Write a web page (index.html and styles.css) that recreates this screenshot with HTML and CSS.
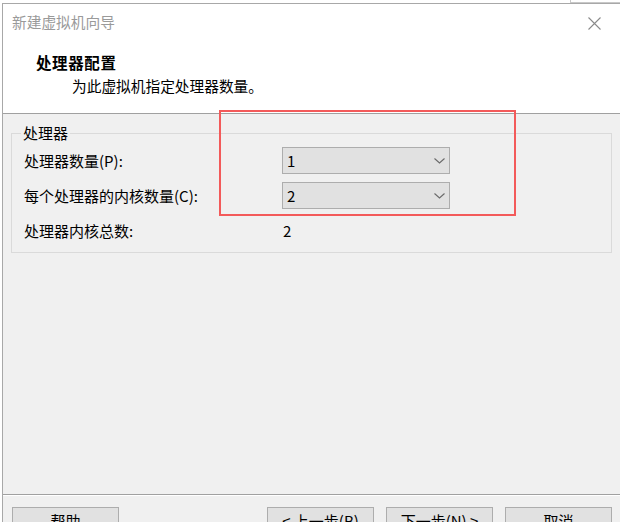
FILE: index.html
```html
<!DOCTYPE html>
<html lang="zh-CN">
<head>
<meta charset="utf-8">
<title>新建虚拟机向导</title>
<link rel="stylesheet" href="styles.css">
</head>
<body>
<div class="behind"></div>
<div class="dialog">
  <div class="header">
    <div class="titlebar">
      <span class="title">新建虚拟机向导</span>
      <svg class="close" width="13" height="13" viewBox="0 0 13 13"><path d="M0.5 0.5 L12.5 12.5 M12.5 0.5 L0.5 12.5" stroke="#8a8a8a" stroke-width="1.1" fill="none"/></svg>
    </div>
    <div class="heading">处理器配置</div>
    <div class="subtitle">为此虚拟机指定处理器数量。</div>
  </div>
  <div class="main">
    <div class="group">
      <div class="legend">处理器</div>
      <div class="rows">
        <div class="label">处理器数量(P):</div>
        <div class="select"><span>1</span><svg width="11" height="6" viewBox="0 0 11 6"><polyline points="0.5,0.5 5.5,5 10.5,0.5" stroke="#6a6a6a" stroke-width="1.1" fill="none"/></svg></div>
        <div class="label">每个处理器的内核数量(C):</div>
        <div class="select"><span>2</span><svg width="11" height="6" viewBox="0 0 11 6"><polyline points="0.5,0.5 5.5,5 10.5,0.5" stroke="#6a6a6a" stroke-width="1.1" fill="none"/></svg></div>
        <div class="label">处理器内核总数:</div>
        <div class="value">2</div>
      </div>
    </div>
  </div>
  <div class="footer">
    <button class="btn">帮助</button>
    <div class="navs">
      <button class="btn">&lt; 上一步(B)</button>
      <button class="btn">下一步(N) &gt;</button>
      <button class="btn">取消</button>
    </div>
  </div>
</div>
<div class="highlight"></div>
</body>
</html>
```
FILE: styles.css
```css
html, body {
  margin: 0;
  padding: 0;
  overflow: hidden;
  height: 522px;
}
body {
  position: relative;
  background: #ffffff;
  padding-top: 3px;
  font-family: "Noto Sans CJK SC", "Microsoft YaHei", sans-serif;
  font-size: 15px;
  color: #000;
  box-sizing: border-box;
}
.behind {
  position: absolute;
  left: 570px;
  top: 0;
  width: 60px;
  height: 2px;
  border-left: 1px solid #c8c8c8;
  border-bottom: 1px solid #c8c8c8;
}
.dialog {
  margin-left: 2px;
  width: 618px;
  border-top: 1px solid #a8a8a8;
  border-left: 1px solid #a8a8a8;
  box-sizing: border-box;
}
.header {
  background: #ffffff;
  height: 110px;
  border-bottom: 1px solid #a0a0a0;
  padding-left: 9px;
  box-sizing: border-box;
}
.titlebar {
  display: flex;
  justify-content: space-between;
  align-items: center;
  padding-top: 8px;
  height: 20px;
  padding-right: 19px;
}
.title {
  color: #9a9a9a;
  line-height: 20px;
  font-size: 14.7px;
}
.close {
  display: block;
  margin-top: 2px;
}
.heading {
  margin-top: 20px;
  margin-left: 24px;
  font-weight: bold;
  font-size: 15.5px;
  letter-spacing: 0.6px;
  line-height: 20px;
}
.subtitle {
  margin-top: 4px;
  margin-left: 60px;
  line-height: 20px;
  font-size: 14.7px;
}
.main {
  background: #f0f0f0;
  height: 380px;
  padding-top: 19px;
  box-sizing: border-box;
}
.group {
  margin: 0 8px 0 8px;
  border: 1px solid #dadada;
  padding: 0 12px 8px 12px;
}
.legend {
  margin-top: -11px;
  margin-left: -3px;
  width: fit-content;
  padding: 0 2px;
  background: #f0f0f0;
  line-height: 20px;
}
.rows {
  margin-top: 4px;
  display: grid;
  grid-template-columns: 258px 168px;
  grid-auto-rows: 27px;
  row-gap: 8px;
  align-items: center;
}
.label {
  line-height: 20px;
}
.select {
  height: 27px;
  box-sizing: border-box;
  background: #e1e1e1;
  border: 1px solid #adadad;
  display: flex;
  align-items: center;
  justify-content: space-between;
  padding: 0 4px 0 4px;
}
.select svg {
  display: block;
}
.value {
  line-height: 20px;
  padding-left: 1px;
}
.footer {
  background: #f0f0f0;
  border-top: 1px solid #a0a0a0;
  box-shadow: inset 0 1px 0 #ffffff;
  padding: 12px 8px 0 9px;
  height: 60px;
  display: flex;
  justify-content: space-between;
}
.navs {
  display: flex;
  gap: 12px;
}
.btn {
  width: 107px;
  height: 28px;
  margin: 0;
  background: #e1e1e1;
  border: 1px solid #adadad;
  font-family: "Noto Sans CJK SC", "Microsoft YaHei", sans-serif;
  font-size: 15px;
  color: #000;
  padding: 0;
  line-height: 26px;
}
.highlight {
  position: absolute;
  left: 219px;
  top: 110px;
  width: 297px;
  height: 106px;
  border: 2px solid #f35a5a;
  box-sizing: border-box;
}
```
